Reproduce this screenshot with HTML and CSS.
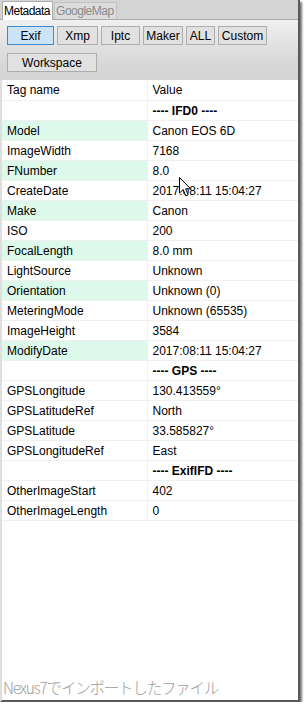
FILE: index.html
```html
<!DOCTYPE html>
<html lang="ja">
<head>
    <meta charset="UTF-8">
    <meta name="viewport" content="width=device-width, initial-scale=1.0">
    <title>Metadata</title>
    <link rel="stylesheet" href="styles.css">
</head>
<body>
    <div class="window">
        <div class="tabs">
            <span class="tab active">Metadata</span>
            <span class="tab">GoogleMap</span>
        </div>

        <div class="panel">
            <div class="btnRow">
                <button class="btn selected w-exif">Exif</button>
                <button class="btn w-xmp">Xmp</button>
                <button class="btn w-iptc">Iptc</button>
                <button class="btn w-maker">Maker</button>
                <button class="btn w-all">ALL</button>
                <button class="btn w-custom">Custom</button>
            </div>
            <div class="btnRow">
                <button class="btn w-workspace">Workspace</button>
            </div>
        </div>

        <div class="gridArea">
            <table class="tagTable">
                <tr><td>Tag name</td><td>Value</td></tr>
                <tr class="section"><td></td><td>---- IFD0 ----</td></tr>
                <tr class="hl"><td>Model</td><td>Canon EOS 6D</td></tr>
                <tr><td>ImageWidth</td><td>7168</td></tr>
                <tr class="hl"><td>FNumber</td><td>8.0</td></tr>
                <tr><td>CreateDate</td><td>2017:08:11 15:04:27</td></tr>
                <tr class="hl"><td>Make</td><td>Canon</td></tr>
                <tr><td>ISO</td><td>200</td></tr>
                <tr class="hl"><td>FocalLength</td><td>8.0 mm</td></tr>
                <tr><td>LightSource</td><td>Unknown</td></tr>
                <tr class="hl"><td>Orientation</td><td>Unknown (0)</td></tr>
                <tr><td>MeteringMode</td><td>Unknown (65535)</td></tr>
                <tr><td>ImageHeight</td><td>3584</td></tr>
                <tr class="hl"><td>ModifyDate</td><td>2017:08:11 15:04:27</td></tr>
                <tr class="section"><td></td><td>---- GPS ----</td></tr>
                <tr><td>GPSLongitude</td><td>130.413559°</td></tr>
                <tr><td>GPSLatitudeRef</td><td>North</td></tr>
                <tr><td>GPSLatitude</td><td>33.585827°</td></tr>
                <tr><td>GPSLongitudeRef</td><td>East</td></tr>
                <tr class="section"><td></td><td>---- ExifIFD ----</td></tr>
                <tr><td>OtherImageStart</td><td>402</td></tr>
                <tr><td>OtherImageLength</td><td>0</td></tr>
            </table>

            <!-- mouse pointer captured in the screenshot -->
            <svg class="cursor" width="13" height="20" viewBox="0 0 13 20">
                <path d="M0.5 0.5 L0.5 16 L4.2 12.6 L6.8 18.8 L9.2 17.8 L6.6 11.8 L11.6 11.8 Z" fill="#fff" stroke="#000" stroke-width="1" stroke-linejoin="round"/>
            </svg>

            <div class="caption">Nexus7でインポートしたファイル</div>
        </div>
    </div>
</body>
</html>
```

FILE: styles.css
```css
* {
    margin: 0;
    padding: 0;
    box-sizing: border-box;
}
body {
    font-family: 'Liberation Sans', Arial, sans-serif;
    font-size: 12px;
    color: #000;
    background-color: #fff;
}
.window {
    width: 300px;
    height: 702px;
    display: flex;
    flex-direction: column;
    background-color: #fff;
    border-left: 2px solid #dedede;
    border-right: 2px solid #5a5a5a;
    border-bottom: 2px solid #5a5a5a;
    box-shadow: 2px 2px 2px rgba(0, 0, 0, 0.55);
}
.tabs {
    height: 20px;
    display: flex;
    align-items: flex-end;
    background-color: #d4d4d4;
    margin-left: -2px;
    padding-left: 2px;
    border-bottom: 1px solid #a8a8a8;
}
.tab {
    height: 17px;
    padding: 0 2px 0 1px;
    line-height: 16px;
    letter-spacing: -0.5px;
    color: #8a8a8a;
    background-color: #dcdcdc;
    border: 1px solid #c2c2c2;
    border-bottom: none;
}
.tab.active {
    height: 19px;
    line-height: 18px;
    color: #000;
    background-color: #fff;
    border-color: #adadad;
    margin-bottom: -1px;
    margin-right: 1px;
}
.panel {
    height: 60px;
    padding: 6px 0 0 7px;
    display: flex;
    flex-direction: column;
    gap: 8px;
    background: linear-gradient(#f0f0f0, #d8d8d8 70%, #d4d4d4);
    margin-left: -2px;
}
.btnRow {
    display: flex;
    gap: 3px;
}
.btn {
    height: 19px;
    font-family: inherit;
    font-size: 12px;
    color: #000;
    background-color: #e1e1e1;
    border: 1px solid #adadad;
    text-align: center;
}
.btn.selected {
    background-color: #cce4f7;
    border-color: #3d8ad0;
}
.w-exif { width: 47px; }
.w-xmp { width: 41px; }
.w-iptc { width: 39px; }
.w-maker { width: 40px; }
.w-all { width: 29px; }
.w-custom { width: 49px; }
.w-workspace { width: 90px; }
.gridArea {
    flex: 1;
    display: flex;
    flex-direction: column;
    position: relative;
}
.tagTable {
    width: 100%;
    border-collapse: collapse;
    table-layout: fixed;
}
.tagTable td {
    height: 20px;
    padding: 1px 5px 0;
    border-bottom: 1px solid #f0f0f0;
    white-space: nowrap;
    overflow: hidden;
}
.tagTable td:first-child {
    width: 145px;
    border-right: 1px solid #f0f0f0;
}
.tagTable tr.hl td:first-child {
    background-color: #ddf9eb;
}
.tagTable tr.section td:last-child {
    font-weight: bold;
}
.cursor {
    position: absolute;
    left: 177px;
    top: 97px;
}
.caption {
    margin-top: auto;
    margin-left: 1px;
    margin-bottom: 2px;
    font-family: 'Noto Sans CJK JP', sans-serif;
    font-weight: 300;
    font-size: 15.5px;
    letter-spacing: -1.2px;
    color: #9c9c9c;
}
```
